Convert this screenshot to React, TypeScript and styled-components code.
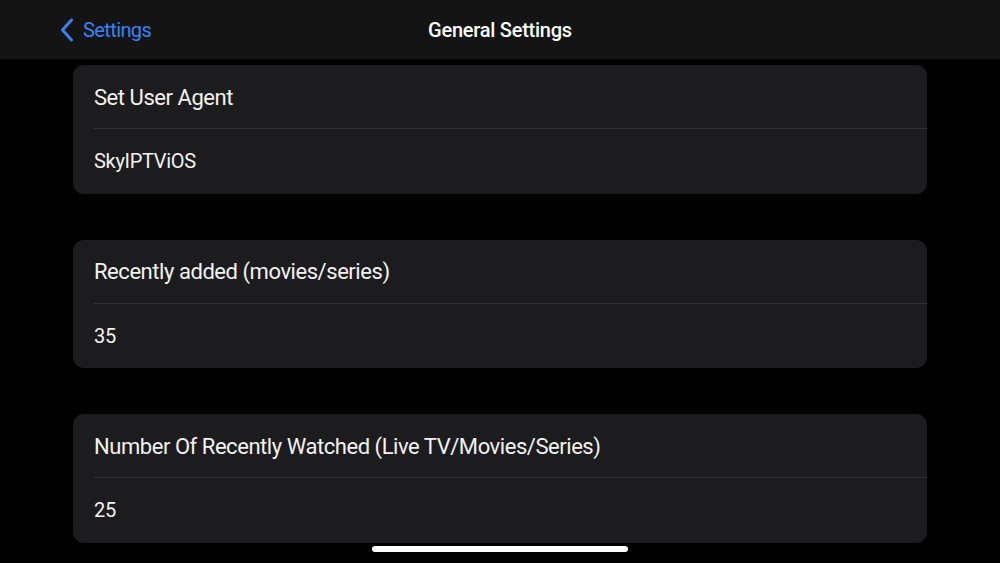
import React from 'react';
import styled, { createGlobalStyle } from 'styled-components';

const GlobalStyle = createGlobalStyle`
	html, body {
		margin: 0;
		padding: 0;
		background: #000;
	}
	body {
		font-family: Roboto, 'Liberation Sans', sans-serif;
		color: #fff;
	}
`;

const Screen = styled.div`
	position: relative;
	width: 1000px;
	height: 563px;
	overflow: hidden;
	background: #000;
`;

const NavBar = styled.header`
	height: 59px;
	background: #141414;
	display: grid;
	grid-template-columns: 1fr auto 1fr;
	align-items: center;
	padding: 0 0 0 60px;
	box-sizing: border-box;
`;

const BackButton = styled.button`
	display: flex;
	align-items: center;
	gap: 9px;
	background: none;
	border: none;
	padding: 0;
	color: #3a82f7;
	font-family: inherit;
	font-size: 20px;
	letter-spacing: -0.6px;
	cursor: pointer;
	justify-self: start;
`;

const Title = styled.h1`
	margin: 0;
	font-size: 20px;
	font-weight: 500;
	letter-spacing: -0.25px;
	color: #fff;
	transform: translateX(-30px);
`;

const List = styled.main`
	display: flex;
	flex-direction: column;
	gap: 46px;
	padding: 6px 73px 0;
`;

const Card = styled.section`
	background: #1c1c1e;
	border-radius: 11px;
	overflow: hidden;
`;

const Row = styled.div<{ $head?: boolean }>`
	box-sizing: border-box;
	height: ${(p) => (p.$head ? '64px' : '64.5px')};
	display: flex;
	align-items: center;
	margin-left: 21px;
	padding-top: ${(p) => (p.$head ? '1px' : '0')};
	font-size: ${(p) => (p.$head ? '22px' : '20px')};
	letter-spacing: ${(p) => (p.$head ? '-0.45px' : '-0.3px')};
	color: #f2f2f2;
	${(p) => p.$head && 'border-bottom: 1px solid #323234;'}
`;

const HomeIndicator = styled.div`
	position: absolute;
	left: 372px;
	bottom: 11px;
	width: 256px;
	height: 6px;
	border-radius: 3px;
	background: #fff;
`;

const settings = [
	{ label: 'Set User Agent', value: 'SkyIPTViOS' },
	{ label: 'Recently added (movies/series)', value: '35' },
	{ label: 'Number Of Recently Watched (Live TV/Movies/Series)', value: '25' },
];

export default function App() {
	return (
		<Screen>
			<GlobalStyle />
			<NavBar>
				<BackButton>
					<svg width="14" height="24" viewBox="0 0 14 24" fill="none">
						<path
							d="M11.5 2 L2.5 12 L11.5 22"
							stroke="#3a82f7"
							strokeWidth="3"
							strokeLinecap="round"
							strokeLinejoin="round"
						/>
					</svg>
					Settings
				</BackButton>
				<Title>General Settings</Title>
				<div />
			</NavBar>
			<List>
				{settings.map((s) => (
					<Card key={s.label}>
						<Row $head>{s.label}</Row>
						<Row>{s.value}</Row>
					</Card>
				))}
			</List>
			<HomeIndicator />
		</Screen>
	);
}
